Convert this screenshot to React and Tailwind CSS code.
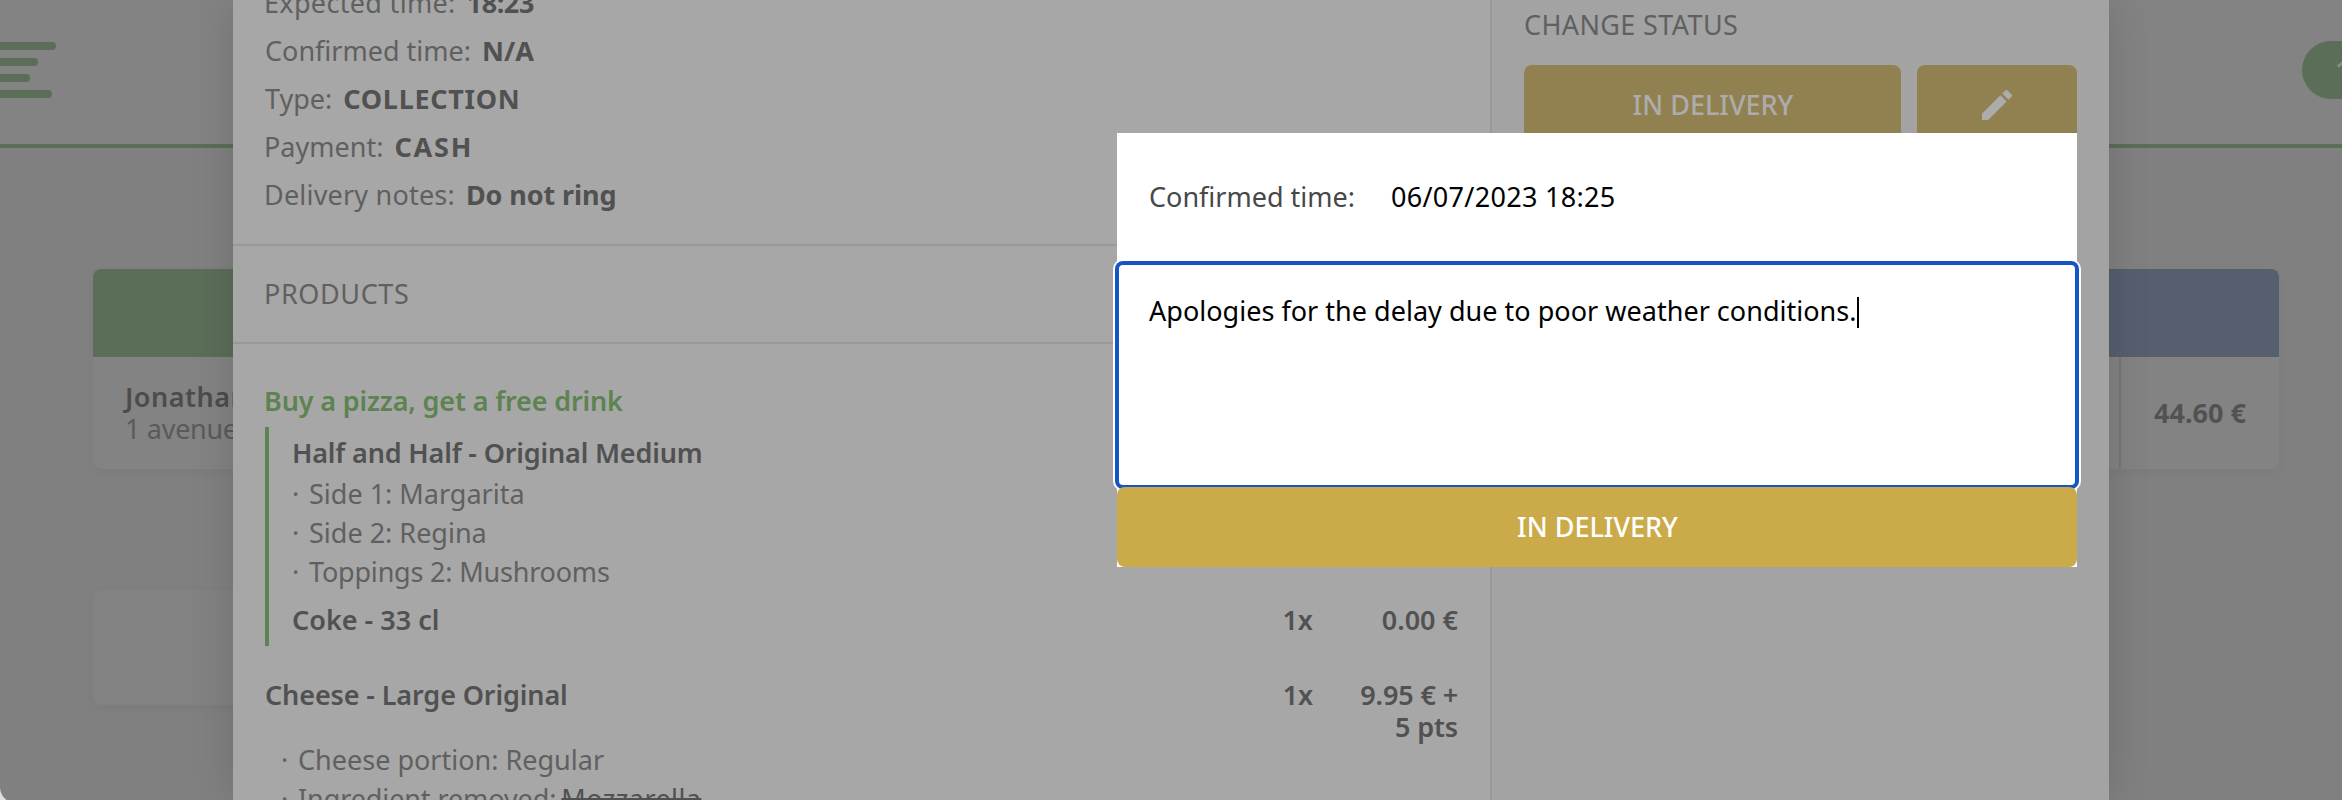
function Info({ label, value, labelClass = '', valueClass = '' }) {
  return (
    <div className="flex h-12 items-center gap-[11px] leading-[48px]">
      <span className={labelClass}>{label}</span>
      <span className={`font-bold text-[#515151] ${valueClass}`}>{value}</span>
    </div>
  );
}

function Option({ children, className = '' }) {
  return (
    <li className={`flex h-[39px] leading-[39px] ${className}`}>
      <span className="w-[17px]">·</span>
      {children}
    </li>
  );
}

function Line({ name, qty, price, className = '' }) {
  return (
    <div className={`flex leading-8 font-semibold text-[#515151] ${className}`}>
      <span className="flex-1">{name}</span>
      <span className="w-[60px] text-right">{qty}</span>
      <span className="w-[145px] text-right whitespace-pre-line">{price}</span>
    </div>
  );
}

function Pencil() {
  return (
    <svg viewBox="0 0 24 24" className="size-10 fill-[#acacac]">
      <path d="M3 17.25V21h3.75L17.81 9.94l-3.75-3.75L3 17.25zM20.71 7.04c.39-.39.39-1.02 0-1.41l-2.34-2.34a.9959.9959 0 0 0-1.41 0l-1.83 1.83 3.75 3.75 1.83-1.83z" />
    </svg>
  );
}

function Page() {
  return (
    <div className="h-[803px] overflow-hidden rounded-bl-[16px] bg-[#808080]">
      <header className="flex h-[148px] justify-between border-b-4 border-[#5b6e58] bg-[#838383]">
        <div className="flex flex-col gap-2 pt-[42px]">
          <i className="h-2 w-[56px] rounded-r-full bg-[#5b6e58]" />
          <i className="h-2 w-[38px] rounded-r-full bg-[#5b6e58]" />
          <i className="h-2 w-[30px] rounded-r-full bg-[#5b6e58]" />
          <i className="h-2 w-[52px] rounded-r-full bg-[#5b6e58]" />
        </div>
        <div className="mt-[41px] h-[58px] w-10 rounded-l-full bg-[#5b6e58] pl-[33px] leading-[58px] font-semibold text-[#8b8b8b]">
          1
        </div>
      </header>
      <main className="pt-[121px] pr-[63px] pl-[93px]">
        <section className="h-[200px] overflow-hidden rounded-lg bg-[#838383] shadow-[0_4px_12px_rgba(0,0,0,0.04)]">
          <div className="flex h-[88px]">
            <div className="flex-1 bg-[#5b6e58]" />
            <div className="flex-1 bg-[#555f6e]" />
          </div>
          <div className="flex h-[112px] items-center justify-between pl-8">
            <div className="leading-8">
              <div className="font-semibold tracking-[0.5px] text-[#4c4c4c]">Jonathan</div>
              <div className="tracking-[-0.3px] text-[#5a5a5a]">1 avenue</div>
            </div>
            <div className="flex h-full w-[160px] items-center border-l-2 border-[#777777] pl-[33px] font-bold text-[#525252]">
              44.60 €
            </div>
          </div>
        </section>
        <section className="mt-[121px] h-[115px] w-[1400px] rounded-lg bg-[#828282] shadow-[0_4px_12px_rgba(0,0,0,0.04)]" />
      </main>
    </div>
  );
}

function StatusPopover() {
  return (
    <div className="absolute top-[133px] left-[884px] flex h-[434px] w-[960px] flex-col bg-white">
      <div className="flex h-[130px] items-center pb-0.5 pl-8">
        <span className="w-[242px] text-[#484848]">Confirmed time:</span>
        <span className="tracking-[0.3px] text-black">06/07/2023 18:25</span>
      </div>
      <div className="flex h-[224px] rounded-[6px] border-2 border-[#1655c6] bg-white pt-[28px] pl-[30px] leading-9 text-black shadow-[0_0_0_2px_#1655c6,0_0_0_4px_#ffffff]">
        <span className="tracking-[0.02px]">Apologies for the delay due to poor weather conditions.</span>
        <i className="mt-1 h-[31px] w-0.5 bg-black" />
      </div>
      <button className="relative h-20 rounded-lg bg-[#cbab49] pl-px font-medium text-white">IN DELIVERY</button>
    </div>
  );
}

function OrderDialog() {
  return (
    <div className="absolute inset-y-0 left-[233px] w-[1876px] shadow-[0_0_40px_rgba(0,0,0,0.14)]">
      <div className="flex h-full overflow-hidden">
        <div className="w-[1259px] shrink-0 border-r-2 border-[#999999] bg-[#a7a7a7] text-[#606060]">
          <section className="-mt-[21px] border-b-2 border-[#999999] pb-[25px] pl-[31px]">
            <Info label="Expected time:" value="18:23" labelClass="tracking-[0.32px]" valueClass="tracking-[-0.4px]" />
            <Info label="Confirmed time:" value="N/A" labelClass="pl-px" />
            <Info label="Type:" value="COLLECTION" labelClass="pl-px" valueClass="tracking-[0.7px]" />
            <Info label="Payment:" value="CASH" valueClass="tracking-[1.8px]" />
            <Info label="Delivery notes:" value="Do not ring" labelClass="tracking-[0.2px]" valueClass="tracking-[-0.1px]" />
          </section>
          <h2 className="h-[98px] border-b-2 border-[#999999] pl-[31px] leading-[96px] tracking-[0.6px]">PRODUCTS</h2>
          <section className="pt-[41px] pr-8 pl-8">
            <h3 className="-ml-px leading-8 font-semibold tracking-[-0.16px] text-[#5c8350]">Buy a pizza, get a free drink</h3>
            <div className="mt-2.5 h-[219px] border-l-4 border-[#5c8350] pt-2.5 pl-[23px]">
              <Line name="Half and Half - Original Medium" className="tracking-[-0.17px]" />
              <ul className="mt-[5px]">
                <Option>Side 1: Margarita</Option>
                <Option>Side 2: Regina</Option>
                <Option className="tracking-[-0.2px]">Toppings 2: Mushrooms</Option>
              </ul>
              <Line name="Coke - 33 cl" qty="1x" price="0.00 €" className="mt-[13px]" />
            </div>
            <Line name="Cheese - Large Original" qty="1x" price={'9.95 € +\n5 pts'} className="mt-[33px] tracking-[-0.12px]" />
            <ul className="-mt-[3px] pl-4">
              <Option>Cheese portion: Regular</Option>
              <Option>
                <span className="tracking-[-0.1px]">Ingredient removed:</span>
                <s className="ml-[5px] tracking-[0.4px] text-[#515151]">Mozzarella</s>
              </Option>
            </ul>
          </section>
        </div>
        <aside className="flex-1 bg-[#a3a3a3] px-8 pt-[9px]">
          <h2 className="leading-8 tracking-[0.37px] text-[#606060]">CHANGE STATUS</h2>
          <div className="mt-6 flex gap-4">
            <button className="h-20 w-[377px] rounded-lg bg-[#928150] pl-px font-medium text-[#acacac]">IN DELIVERY</button>
            <button className="flex h-20 w-40 items-center justify-center rounded-lg bg-[#928150]">
              <Pencil />
            </button>
          </div>
        </aside>
      </div>
      <StatusPopover />
    </div>
  );
}

export default function App() {
  return (
    <div className="relative h-[800px] w-[2342px] overflow-hidden bg-[#dedede] font-['Noto_Sans',sans-serif] text-[27px] whitespace-nowrap">
      <Page />
      <OrderDialog />
    </div>
  );
}
